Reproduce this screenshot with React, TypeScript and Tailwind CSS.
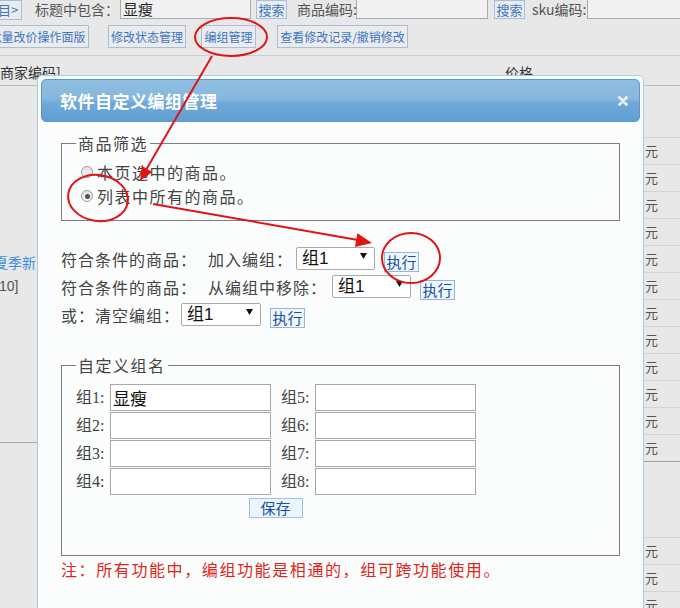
import React from "react";

const Btn = ({ children, className = "" }: { children: React.ReactNode; className?: string }) => (
  <div
    className={`shrink-0 border border-[#a6bfdd] bg-[#ebebeb] text-[12px] text-[#3b76c6] text-center whitespace-nowrap ${className}`}
  >
    {children}
  </div>
);

const Radio = ({ checked }: { checked?: boolean }) => (
  <span className="w-[12px] h-[12px] rounded-full border border-[#9c9c9c] bg-[linear-gradient(#e2e2e2,#f7f7f7)] flex items-center justify-center shrink-0">
    {checked && <span className="w-[5px] h-[5px] rounded-full bg-[#505050]" />}
  </span>
);

const Select = ({ w }: { w: string }) => (
  <div
    className={`${w} h-[23px] shrink-0 flex items-center justify-between border border-[#a9a9a9] rounded-[2px] bg-white pl-[5px] pr-[7px]`}
  >
    <span className="text-[17px] leading-[21px] tracking-normal text-[#111] font-['Liberation_Sans','Noto_Sans_CJK_SC',sans-serif]">组1</span>
    <svg width="7" height="6" viewBox="0 0 7 6" className="-mt-[5px]">
      <polygon points="0,0 7,0 3.5,6" fill="#111" />
    </svg>
  </div>
);

const Exec = ({ className = "" }: { className?: string }) => (
  <div
    className={`w-[35px] h-[20px] shrink-0 border border-[#98b6dd] bg-[#eef7fe] text-[15px] leading-[18px] tracking-normal text-[#1d4f9e] text-center ${className}`}
  >
    执行
  </div>
);

const GroupField = ({ n, value }: { n: number; value?: string }) => (
  <div className="flex items-center h-[27px]">
    <span className="w-[34px] shrink-0 text-[16px] text-[#444] font-['Liberation_Serif','Noto_Sans_CJK_SC',serif]">
      组{n}:
    </span>
    <div className="w-[161px] h-[27px] border border-[#a8a8a8] bg-white pl-[2px] text-[17px] leading-[25px] text-[#111]">
      {value}
    </div>
  </div>
);

export default function App() {
  const rows12 = Array.from({ length: 12 });
  return (
    <div className="relative w-[680px] h-[608px] overflow-hidden bg-[#e8e8e8] font-['Noto_Sans_CJK_SC',sans-serif] text-[#444]">
      {/* Row 1 */}
      <div className="flex items-start h-[21px] whitespace-nowrap">
        <Btn className="w-[41px] -ml-[19px] h-[20px] leading-[18px] text-[13px]">项目&gt;</Btn>
        <span className="ml-[13px] w-[85px] shrink-0 text-[14px] leading-[19px] text-[#555]">标题中包含：</span>
        <div className="w-[131px] h-[22px] -mt-[3px] shrink-0 border border-[#aaa] bg-[#f1f1f1] pl-[2px] text-[15px] leading-[22px] text-[#222]">
          显瘦
        </div>
        <Btn className="ml-[5px] w-[31px] h-[19px] leading-[17px] text-[13px]">搜索</Btn>
        <span className="ml-[10px] w-[59px] shrink-0 text-[14px] leading-[19px] text-[#555] whitespace-nowrap">商品编码:</span>
        <div className="w-[132px] h-[22px] -mt-[3px] shrink-0 border border-[#aaa] bg-[#f1f1f1]" />
        <Btn className="ml-[6px] w-[31px] h-[19px] leading-[17px] text-[13px]">搜索</Btn>
        <span className="ml-[7px] w-[55px] shrink-0 text-[14px] leading-[19px] text-[#555] whitespace-nowrap">sku编码:</span>
        <div className="w-[100px] h-[22px] -mt-[3px] shrink-0 border border-[#aaa] bg-[#f1f1f1]" />
      </div>

      {/* Row 2 */}
      <div className="flex items-start mt-[4px] h-[23px]">
        <Btn className="w-[103px] -ml-[14px] h-[23px] leading-[21px]">批量改价操作面版</Btn>
        <Btn className="ml-[19px] w-[78px] h-[23px] leading-[21px]">修改状态管理</Btn>
        <Btn className="ml-[15px] w-[55px] h-[23px] leading-[21px]">编组管理</Btn>
        <Btn className="ml-[21px] w-[131px] h-[23px] leading-[21px]">查看修改记录/撤销修改</Btn>
      </div>
      <div className="mt-[7px] h-px bg-[#c3cfdc]" />

      {/* Table header */}
      <div className="flex items-start h-[30px] border-b border-[#bdbdbd] pt-[6px]">
        <span className="w-[505px] shrink-0 text-[14px] leading-[20px] text-[#333]">商家编码]</span>
        <span className="text-[14px] leading-[20px] text-[#333]">价格</span>
      </div>

      {/* Table body */}
      <div className="flex">
        <div className="w-[37px] shrink-0 overflow-hidden">
          <div className="mt-[166px] -ml-[6px] whitespace-nowrap text-[14px] leading-[20px] text-[#3d8fd8]">夏季新</div>
          <div className="mt-[4px] -ml-[5px] whitespace-nowrap text-[14px] leading-[20px] text-[#555] font-['Liberation_Sans',sans-serif]">
            [10]
          </div>
          <div className="mt-[146px] border-t border-[#a8a8a8]" />
        </div>
        <div className="flex-1" />
        <div className="w-[36px] shrink-0">
          <div className="h-[51px]" />
          {rows12.map((_, i) => (
            <div key={i} className="h-[27px] border-t border-[#d3d3d3] pl-[1px] text-[13px] leading-[26px] text-[#555]">
              元
            </div>
          ))}
          <div className="h-[76px] border-t border-[#9e9e9e]" />
          {[0, 1, 2].map((i) => (
            <div key={i} className="h-[27px] border-t border-[#d3d3d3] pl-[1px] text-[13px] leading-[26px] text-[#555]">
              元
            </div>
          ))}
        </div>
      </div>

      {/* Dialog */}
      <div className="absolute left-[37px] top-[75px] w-[607px] h-[545px] border border-[#a9cbe5] rounded-t-[5px] bg-[#fbfdfd] p-[3px]">
        <div className="h-[43px] rounded-[5px] border border-[#5e98cb] bg-[linear-gradient(to_bottom,#8fbee2_0%,#87b7dd_45%,#70a9d8_56%,#5f9ed3_100%)] flex items-center justify-between pl-[18px] pr-[11px]">
          <span className="text-white font-bold text-[17px] tracking-[0.5px] leading-[22px]">软件自定义编组管理</span>
          <svg width="10" height="10" viewBox="0 0 10 10">
            <path d="M1.5 1.5 L8.5 8.5 M8.5 1.5 L1.5 8.5" stroke="#e6eef6" strokeWidth="2.8" strokeLinecap="round" />
          </svg>
        </div>

        <div className="px-[20px]">
          {/* Fieldset 1 */}
          <fieldset className="mt-[11px] border border-[#7d7d7d]">
            <legend className="ml-[14px] px-[2px] text-[16px] leading-[20px] tracking-[1.5px] text-[#444]">商品筛选</legend>
            <div className="pl-[19px] pt-[7px] pb-[12px]">
              <div className="flex items-center h-[24px] gap-[4px]">
                <Radio />
                <span className="text-[16px] tracking-[1.5px] text-[#444]">本页选中的商品。</span>
              </div>
              <div className="flex items-center h-[24px] gap-[4px]">
                <Radio checked />
                <span className="text-[16px] tracking-[1.5px] text-[#444]">列表中所有的商品。</span>
              </div>
            </div>
          </fieldset>

          {/* Action rows */}
          <div className="mt-[26px] flex flex-col gap-[5px] text-[16px] tracking-[1px] text-[#444] whitespace-nowrap">
            <div className="flex items-center h-[23px]">
              <span className="w-[147px] shrink-0">符合条件的商品：</span>
              <span className="w-[88px] shrink-0">加入编组：</span>
              <Select w="w-[79px]" />
              <Exec className="ml-[9px] mt-[7px]" />
            </div>
            <div className="flex items-center h-[23px]">
              <span className="w-[147px] shrink-0">符合条件的商品：</span>
              <span className="w-[124px] shrink-0">从编组中移除：</span>
              <Select w="w-[79px]" />
              <Exec className="ml-[9px] mt-[7px]" />
            </div>
            <div className="flex items-center h-[23px]">
              <span className="w-[120px] shrink-0">或：清空编组：</span>
              <Select w="w-[80px]" />
              <Exec className="ml-[9px] mt-[7px]" />
            </div>
          </div>

          {/* Fieldset 2 */}
          <fieldset className="mt-[29px] border border-[#7d7d7d]">
            <legend className="ml-[14px] px-[2px] text-[16px] leading-[20px] tracking-[1.5px] text-[#444]">自定义组名</legend>
            <div className="pl-[14px] pt-[9px] pb-[37px]">
              <div className="w-[399px]">
                <div className="grid grid-cols-[195px_195px] gap-x-[10px] gap-y-[1px]">
                  <GroupField n={1} value="显瘦" />
                  <GroupField n={5} />
                  <GroupField n={2} />
                  <GroupField n={6} />
                  <GroupField n={3} />
                  <GroupField n={7} />
                  <GroupField n={4} />
                  <GroupField n={8} />
                </div>
                <div className="flex justify-center mt-[3px]">
                  <div className="w-[54px] h-[20px] border border-[#a3c2e3] bg-[#eaf6fe] text-[15px] leading-[18px] text-[#1d4f9e] text-center">
                    保存
                  </div>
                </div>
              </div>
            </div>
          </fieldset>

          <div className="mt-[2px] text-[16px] leading-[22px] tracking-[1.6px] text-[#e2231a]">
            注：所有功能中，编组功能是相通的，组可跨功能使用。
          </div>
        </div>
      </div>

      {/* Red annotations */}
      <svg className="absolute left-0 top-0 pointer-events-none" width="680" height="608" viewBox="0 0 680 608">
        <g stroke="#e01414" strokeWidth="2" fill="none">
          <ellipse cx="231" cy="37" rx="36" ry="19" />
          <ellipse cx="98" cy="198" rx="30" ry="23" transform="rotate(8 98 198)" />
          <ellipse cx="411" cy="258" rx="29" ry="25" />
          <line x1="212" y1="56" x2="146" y2="170" />
          <line x1="153" y1="204" x2="358" y2="240" />
        </g>
        <g fill="#e01414">
          <polygon points="140,181 152.3,171.9 141.9,165.9" />
          <polygon points="372,243 355,247.1 357.4,233.3" />
        </g>
      </svg>
    </div>
  );
}
